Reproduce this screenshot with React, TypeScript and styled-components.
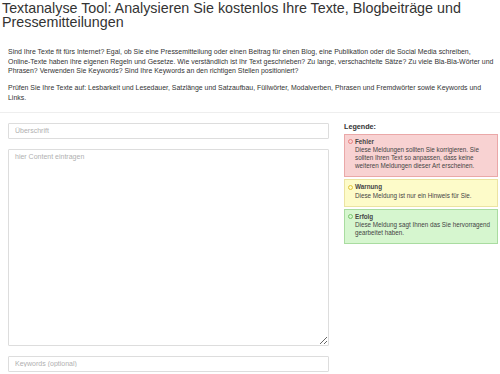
import * as React from 'react';
import styled, { createGlobalStyle } from 'styled-components';

const GlobalStyle = createGlobalStyle`
  html, body {
    margin: 0;
    padding: 0;
    background: #fff;
  }
  body {
    font-family: "Liberation Sans", Arial, sans-serif;
    color: #333;
  }
`;

const Page = styled.div`
  width: 500px;
  padding-top: 1px;
`;

const Intro = styled.header`
  padding: 0 0 0 2px;
`;

const Title = styled.h1`
  margin: 0;
  font-size: 14.3px;
  line-height: 14px;
  font-weight: normal;
  color: #333;
`;

const Text = styled.p`
  margin: 0 0 7px 6px;
  font-size: 6.95px;
  line-height: 9.7px;
  color: #333;
  &:first-of-type {
    margin-top: 18px;
  }
`;

const Word = styled.span`
  white-space: nowrap;
`;

const Divider = styled.hr`
  margin: 9px 0 0;
  border: 0;
  border-top: 1px solid #eee;
`;

const Main = styled.div`
  display: flex;
  gap: 15px;
  padding: 10px 2px 0 8px;
`;

const Form = styled.div`
  width: 321px;
  display: flex;
  flex-direction: column;
  gap: 10px;
`;

const Field = styled.input`
  box-sizing: border-box;
  width: 100%;
  height: 16px;
  margin: 0;
  padding: 0 6px;
  border: 1px solid #ddd;
  border-radius: 1px;
  font-family: inherit;
  font-size: 7px;
  color: #555;
  outline: none;
  &::placeholder {
    color: #b0b0b0;
  }
`;

const Area = styled.textarea`
  box-sizing: border-box;
  width: 100%;
  height: 197px;
  margin: 0;
  padding: 3px 6px;
  border: 1px solid #ddd;
  border-radius: 1px;
  font-family: inherit;
  font-size: 7px;
  color: #555;
  resize: vertical;
  outline: none;
  &::placeholder {
    color: #b0b0b0;
  }
`;

const Legend = styled.aside`
  width: 154px;
  display: flex;
  flex-direction: column;
  gap: 2px;
`;

const LegendTitle = styled.div`
  font-size: 7.2px;
  font-weight: bold;
  line-height: 9px;
  color: #333;
  margin: -1px 0 1px;
`;

const tones = {
  error: { bg: '#f8d2d2', border: '#eaa8a8', ring: '#e88080' },
  warning: { bg: '#fdfbc9', border: '#ebe3a2', ring: '#e0c43a' },
  success: { bg: '#d6f6cf', border: '#a9dca0', ring: '#78c46c' },
};

type Tone = keyof typeof tones;

const Box = styled.div<{ $tone: Tone }>`
  display: flex;
  gap: 2px;
  padding: 3px 4px 6px 3px;
  background: ${p => tones[p.$tone].bg};
  border: 1px solid ${p => tones[p.$tone].border};
  font-size: 6.3px;
  line-height: 8.2px;
  color: #444;
`;

const Ring = styled.span<{ $tone: Tone }>`
  flex: none;
  box-sizing: border-box;
  width: 5px;
  height: 5px;
  margin-top: 1.6px;
  border-radius: 50%;
  border: 1px solid ${p => tones[p.$tone].ring};
`;

const BoxBody = styled.div`
  display: flex;
  flex-direction: column;
`;

const BoxTitle = styled.strong`
  font-weight: bold;
  color: #444;
`;

const legend: { tone: Tone; title: string; text: string }[] = [
  {
    tone: 'error',
    title: 'Fehler',
    text: 'Diese Meldungen sollten Sie korrigieren. Sie sollten Ihren Text so anpassen, dass keine weiteren Meldungen dieser Art erscheinen.',
  },
  {
    tone: 'warning',
    title: 'Warnung',
    text: 'Diese Meldung ist nur ein Hinweis für Sie.',
  },
  {
    tone: 'success',
    title: 'Erfolg',
    text: 'Diese Meldung sagt Ihnen das Sie hervorragend gearbeitet haben.',
  },
];

export default function App() {
  return (
    <Page>
      <GlobalStyle />
      <Intro>
        <Title>Textanalyse Tool: Analysieren Sie kostenlos Ihre Texte, Blogbeiträge und Pressemitteilungen</Title>
        <Text>
          Sind Ihre Texte fit fürs Internet? Egal, ob Sie eine Pressemitteilung oder einen Beitrag für einen Blog, eine Publikation oder die Social Media schreiben, <Word>Online-Texte</Word> haben ihre eigenen Regeln und Gesetze. Wie verständlich ist Ihr Text geschrieben? Zu lange, verschachtelte Sätze? Zu viele <Word>Bla-Bla-Wörter</Word> und Phrasen? Verwenden Sie Keywords? Sind Ihre Keywords an den richtigen Stellen positioniert?
        </Text>
        <Text>
          Prüfen Sie Ihre Texte auf: Lesbarkeit und Lesedauer, Satzlänge und Satzaufbau, Füllwörter, Modalverben, Phrasen und Fremdwörter sowie Keywords und Links.
        </Text>
      </Intro>
      <Divider />
      <Main>
        <Form>
          <Field placeholder="Überschrift" />
          <Area placeholder="hier Content eintragen" />
          <Field placeholder="Keywords (optional)" />
        </Form>
        <Legend>
          <LegendTitle>Legende:</LegendTitle>
          {legend.map(item => (
            <Box key={item.tone} $tone={item.tone}>
              <Ring $tone={item.tone} />
              <BoxBody>
                <BoxTitle>{item.title}</BoxTitle>
                <span>{item.text}</span>
              </BoxBody>
            </Box>
          ))}
        </Legend>
      </Main>
    </Page>
  );
}
